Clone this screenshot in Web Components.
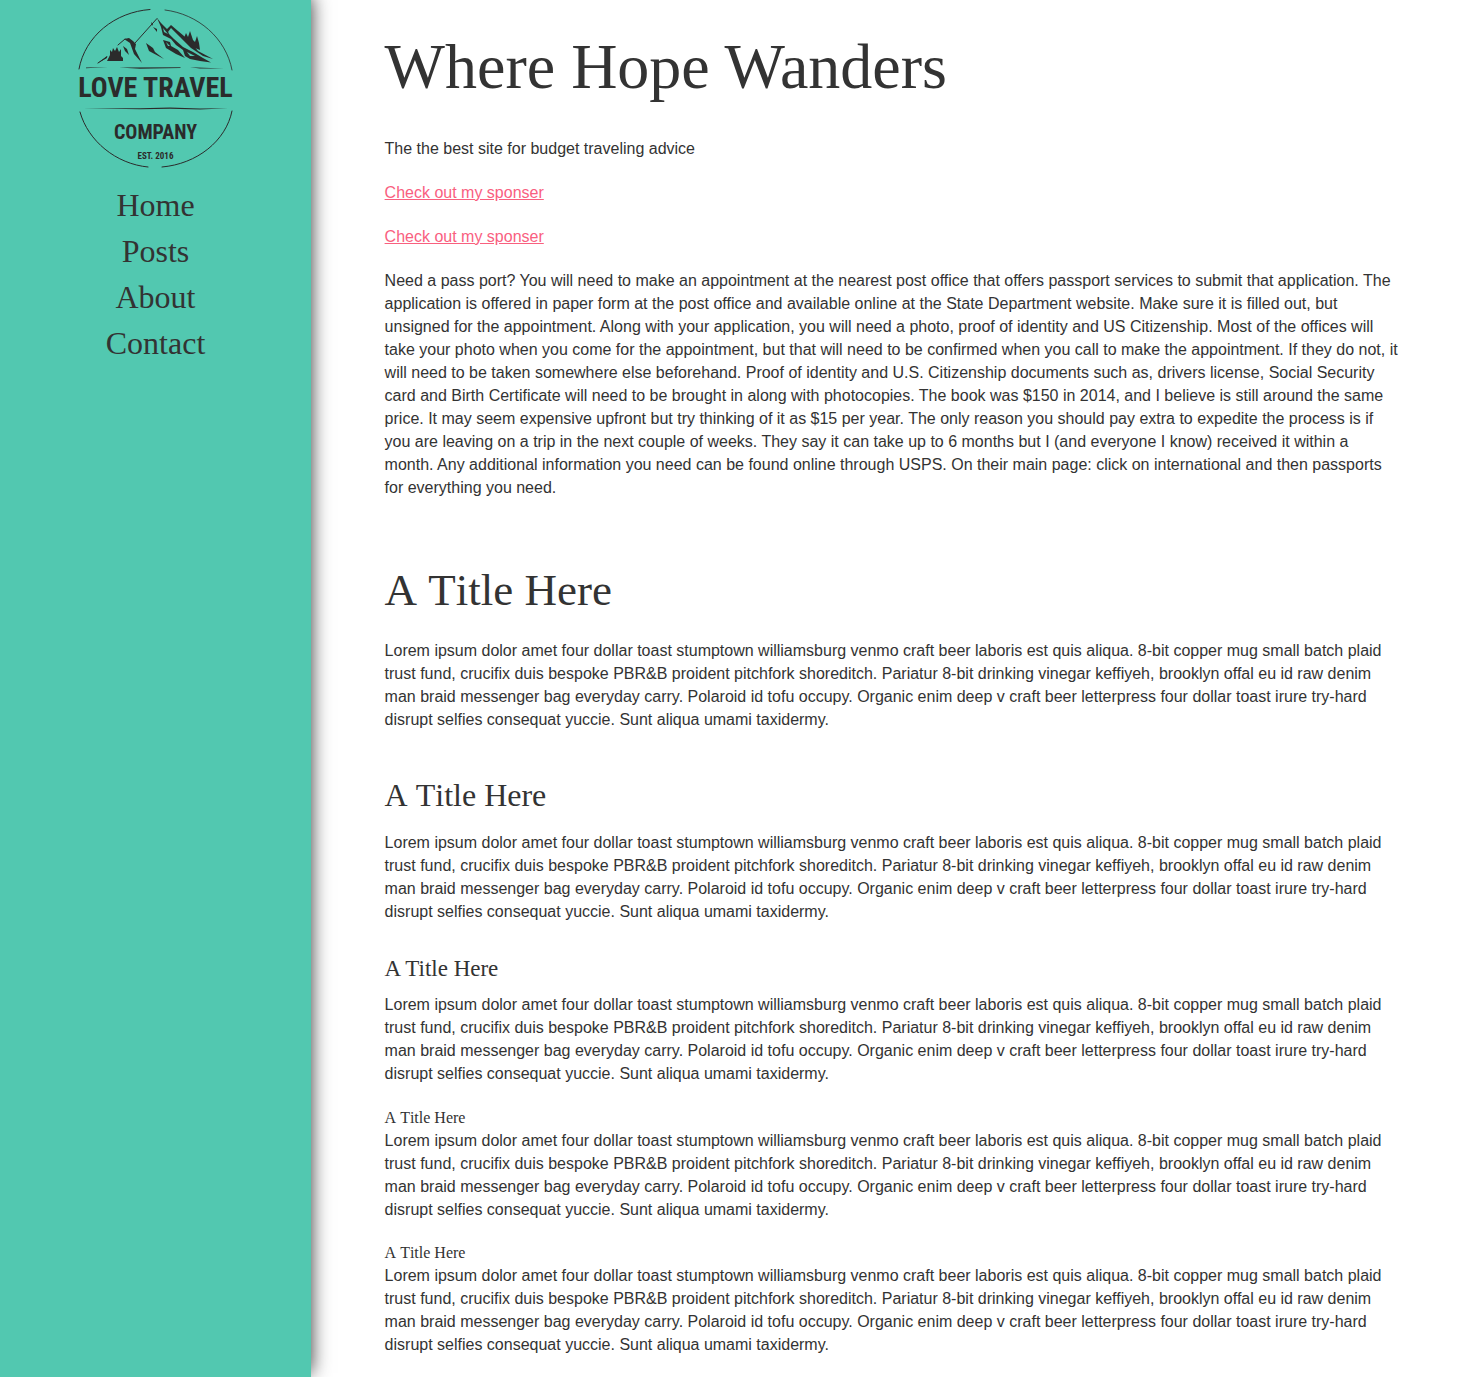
<!DOCTYPE html>
<html lang="en">
<head>
<meta charset="utf-8">
<meta name="viewport" content="width=device-width, initial-scale=1">
<title>Where Hope Wanders</title>
<style>
  body {
    margin: 0;
    background: #fff;
    color: #333;
    font: 16px/23px "Liberation Sans", Arial, sans-serif;
  }
</style>
</head>
<body>
<travel-page>
  <site-sidebar slot="sidebar">
    <travel-logo slot="logo"></travel-logo>
    <nav-link href="#home">Home</nav-link>
    <nav-link href="#posts">Posts</nav-link>
    <nav-link href="#about">About</nav-link>
    <nav-link href="#contact">Contact</nav-link>
  </site-sidebar>
  <text-section level="1" heading="Where Hope Wanders">
    <p>The the best site for budget traveling advice</p>
    <p><sponsor-link href="#sponser">Check out my sponser</sponsor-link></p>
    <p><sponsor-link href="#sponser">Check out my sponser</sponsor-link></p>
    <p>Need a pass port? You will need to make an appointment at the nearest post office that offers passport services to submit that application. The application is offered in paper form at the post office and available online at the State Department website. Make sure it is filled out, but unsigned for the appointment. Along with your application, you will need a photo, proof of identity and US Citizenship. Most of the offices will take your photo when you come for the appointment, but that will need to be confirmed when you call to make the appointment. If they do not, it will need to be taken somewhere else beforehand. Proof of identity and U.S. Citizenship documents such as, drivers license, Social Security card and Birth Certificate will need to be brought in along with photocopies. The book was $150 in 2014, and I believe is still around the same price. It may seem expensive upfront but try thinking of it as $15 per year. The only reason you should pay extra to expedite the process is if you are leaving on a trip in the next couple of weeks. They say it can take up to 6 months but I (and everyone I know) received it within a month. Any additional information you need can be found online through USPS. On their main page: click on international and then passports for everything you need.</p>
  </text-section>
  <text-section level="2" heading="A Title Here">
    <p>Lorem ipsum dolor amet four dollar toast stumptown williamsburg venmo craft beer laboris est quis aliqua. 8-bit copper mug small batch plaid trust fund, crucifix duis bespoke PBR&amp;B proident pitchfork shoreditch. Pariatur 8-bit drinking vinegar keffiyeh, brooklyn offal eu id raw denim man braid messenger bag everyday carry. Polaroid id tofu occupy. Organic enim deep v craft beer letterpress four dollar toast irure try-hard disrupt selfies consequat yuccie. Sunt aliqua umami taxidermy.</p>
  </text-section>
  <text-section level="3" heading="A Title Here">
    <p>Lorem ipsum dolor amet four dollar toast stumptown williamsburg venmo craft beer laboris est quis aliqua. 8-bit copper mug small batch plaid trust fund, crucifix duis bespoke PBR&amp;B proident pitchfork shoreditch. Pariatur 8-bit drinking vinegar keffiyeh, brooklyn offal eu id raw denim man braid messenger bag everyday carry. Polaroid id tofu occupy. Organic enim deep v craft beer letterpress four dollar toast irure try-hard disrupt selfies consequat yuccie. Sunt aliqua umami taxidermy.</p>
  </text-section>
  <text-section level="4" heading="A Title Here">
    <p>Lorem ipsum dolor amet four dollar toast stumptown williamsburg venmo craft beer laboris est quis aliqua. 8-bit copper mug small batch plaid trust fund, crucifix duis bespoke PBR&amp;B proident pitchfork shoreditch. Pariatur 8-bit drinking vinegar keffiyeh, brooklyn offal eu id raw denim man braid messenger bag everyday carry. Polaroid id tofu occupy. Organic enim deep v craft beer letterpress four dollar toast irure try-hard disrupt selfies consequat yuccie. Sunt aliqua umami taxidermy.</p>
  </text-section>
  <text-section level="5" heading="A Title Here">
    <p>Lorem ipsum dolor amet four dollar toast stumptown williamsburg venmo craft beer laboris est quis aliqua. 8-bit copper mug small batch plaid trust fund, crucifix duis bespoke PBR&amp;B proident pitchfork shoreditch. Pariatur 8-bit drinking vinegar keffiyeh, brooklyn offal eu id raw denim man braid messenger bag everyday carry. Polaroid id tofu occupy. Organic enim deep v craft beer letterpress four dollar toast irure try-hard disrupt selfies consequat yuccie. Sunt aliqua umami taxidermy.</p>
  </text-section>
  <text-section level="6" heading="A Title Here">
    <p>Lorem ipsum dolor amet four dollar toast stumptown williamsburg venmo craft beer laboris est quis aliqua. 8-bit copper mug small batch plaid trust fund, crucifix duis bespoke PBR&amp;B proident pitchfork shoreditch. Pariatur 8-bit drinking vinegar keffiyeh, brooklyn offal eu id raw denim man braid messenger bag everyday carry. Polaroid id tofu occupy. Organic enim deep v craft beer letterpress four dollar toast irure try-hard disrupt selfies consequat yuccie. Sunt aliqua umami taxidermy.</p>
  </text-section>
</travel-page>
<script>
  class ShadowElement extends HTMLElement {
    render(html) {
      this.attachShadow({ mode: "open" }).innerHTML = html;
    }
  }

  customElements.define("travel-page", class extends ShadowElement {
    connectedCallback() {
      this.render(`
        <style>
          :host { display: flex; min-height: 100vh; overflow: hidden; }
          main { flex: 1; min-width: 0; padding: 21px 5% 0; }
        </style>
        <slot name="sidebar"></slot>
        <main><slot></slot></main>`);
    }
  });

  customElements.define("site-sidebar", class extends ShadowElement {
    connectedCallback() {
      this.render(`
        <style>
          :host {
            display: block;
            flex: 0 0 311px;
            background: #52c8b0;
            box-shadow: 0 -4px 18px #333;
          }
          aside { display: flex; flex-direction: column; align-items: center; gap: 13px; padding-top: 8px; }
          nav { display: flex; flex-direction: column; align-items: center; }
        </style>
        <aside>
          <slot name="logo"></slot>
          <nav aria-label="Main"><slot></slot></nav>
        </aside>`);
    }
  });

  customElements.define("nav-link", class extends ShadowElement {
    connectedCallback() {
      this.render(`
        <style>
          :host { display: block; }
          a {
            display: block;
            color: #333;
            text-decoration: none;
            font: 32px/46px "Liberation Serif", "Times New Roman", serif;
          }
        </style>
        <a href="${this.getAttribute("href")}"><slot></slot></a>`);
    }
  });

  customElements.define("sponsor-link", class extends ShadowElement {
    connectedCallback() {
      this.render(`
        <style>
          :host { display: inline; }
          a { color: #f9607f; }
        </style>
        <a href="${this.getAttribute("href")}"><slot></slot></a>`);
    }
  });

  customElements.define("text-section", class extends ShadowElement {
    connectedCallback() {
      const tag = "h" + this.getAttribute("level");
      this.render(`
        <style>
          :host { display: block; }
          h1, h2, h3, h4, h5, h6 {
            margin: 0;
            font-family: "Liberation Serif", "Times New Roman", serif;
            font-weight: 400;
          }
          h2, h3, h5, h6 { font-kerning: none; }
          h1 { font-size: 64px; line-height: 92px; margin-bottom: 24px; }
          h2 { font-size: 45px; line-height: 64px; padding-top: 38px; margin-bottom: 17px; }
          h3 { font-size: 32px; line-height: 46px; padding-top: 20px; margin-bottom: 13px; }
          h4 { font-size: 23px; line-height: 32px; padding-top: 9px; margin-bottom: 8px; }
          h5 { font-size: 16px; line-height: 23px; }
          h6 { font-size: 16px; line-height: 22px; }
          ::slotted(p) { margin: 0 0 21px; }
        </style>
        <section>
          <${tag}>${this.getAttribute("heading")}</${tag}>
          <slot></slot>
        </section>`);
    }
  });

  customElements.define("travel-logo", class extends ShadowElement {
    connectedCallback() {
      this.render(`
        <style>
          :host { display: block; line-height: 0; }
          svg { width: 157px; height: 161px; }
          text { fill: #2b2b2b; font-family: "Liberation Sans Narrow", "Roboto Condensed", "Liberation Sans", sans-serif; font-weight: 700; text-anchor: middle; }
        </style>
        <svg viewBox="77 8 157 161" role="img" aria-label="Love Travel Company">
          <g fill="none" stroke="#2b2b2b" stroke-linecap="round">
            <path d="M79 69C85 36 115 12 150 9.500" stroke-width="1"/>
            <path d="M165 10C198 14 226 38 232 70" stroke-width=".8"/>
            <path d="M80 112C88 141 116 164 148 167" stroke-width="1"/>
            <path d="M162 167C197 164 226 141 232 111" stroke-width="1"/>
            <path d="M98 63L107 57M118 45L125 39M135 43L157 18.500" stroke-width="1"/>
          </g>
          <g fill="#2b2b2b">
            <path d="M86 67.500L108 67.100 86 68.300ZM119 67.600L180 67.200 181 68 140 68.800ZM190 67.200L224 68.500 200 68.600Z"/>
            <path d="M83 108.300L140 108.300 170 107.500 200 108.500 228 108.300 200 109.600 170 108.800 140 109.300Z"/>
            <path d="M97 63.500L107 56 107 58ZM124 39L129 38 133 41 136 44 135 49 142 63 134 54 130 43Z"/>
            <path fill-rule="evenodd" d="M157 18L161 23 167 29 169 34 174 39 183 47 193 52 203 58 211 62.500 200 61 190 59 185 56 183 50 176 45 171 39 163 35 161 27ZM163 28L164 32 168 34ZM187 52L190 56 195 56Z"/>
            <path d="M166 30L171 25 178 31 190 41 198 51 213 59 203 56 191 48 180 37 171 28 168 32Z"/>
            <path fill-rule="evenodd" d="M163 40L170 42 171 46 178 50 185 58 176 54 166 48ZM166 42L168 46 170 46Z"/>
            <path d="M107 61L110 55 110 50 112 52 113 48 115 51 117 47 119 52 121 49 121 56 123 58 123 61Z"/>
            <path d="M184 38L186 33 188 37 190 31 193 40 195 42 197 36 199 43 200 50 195 48Z"/>
            <path d="M123 46L127 49 129 55 125 51ZM146 43L153 48 155 52 164 59 149 51ZM151 22L153 24 152 26ZM153 27L157 29 157 32Z"/>
          </g>
          <text x="155.500" y="97" font-size="28">LOVE TRAVEL</text>
          <text x="155.500" y="139" font-size="20">COMPANY</text>
          <text x="155.500" y="159" font-size="9">EST. 2016</text>
        </svg>`);
    }
  });
</script>
</body>
</html>
